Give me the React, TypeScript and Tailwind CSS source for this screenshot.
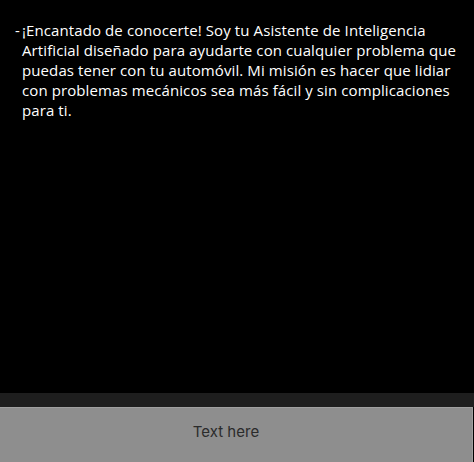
export default function App() {
  return (
    <div className="flex h-[462px] w-[474px] flex-col bg-black">
      <div className="flex-1 pl-[15px] pr-[8px] pt-[20px]">
        <div
          className="flex text-[15px] leading-[20px] tracking-[0.1px] text-white"
          style={{ fontFamily: '"Open Sans", sans-serif' }}
        >
          <span className="w-[7px] shrink-0">-</span>
          <p>
            ¡Encantado de conocerte! Soy tu Asistente de Inteligencia Artificial diseñado para ayudarte con cualquier
            problema que puedas tener con tu automóvil. Mi misión es hacer que lidiar con problemas mecánicos sea más
            fácil y sin complicaciones para ti.
          </p>
        </div>
      </div>
      <div className="h-[14px] bg-[#1e1e1e]" />
      <div className="flex h-[55px] w-[473px] items-center justify-center border-r border-t border-[#a0a0a0] bg-[#8e8e8e] pb-[6px] pr-[20px]">
        <span className="text-[15px] text-[#2b2b2b]" style={{ fontFamily: 'Inter, sans-serif' }}>
          Text here
        </span>
      </div>
    </div>
  )
}
